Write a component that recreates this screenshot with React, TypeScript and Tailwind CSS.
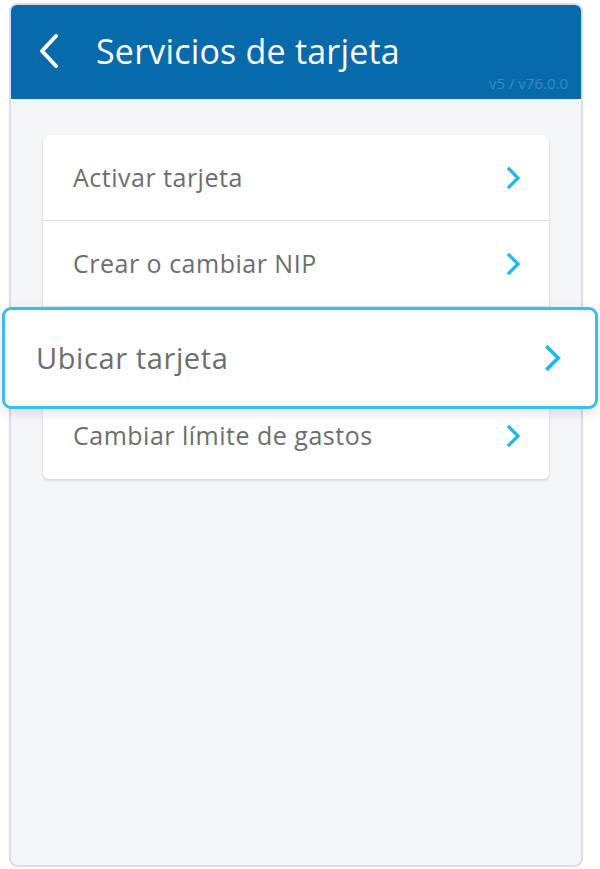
import React from "react";

const Chevron = ({ className }: { className?: string }) => (
  <svg viewBox="0 0 16 24" className={className} fill="none">
    <polyline points="3,3 12,12 3,21" stroke="#1cb9ea" strokeWidth="3.2" strokeLinecap="square" strokeLinejoin="miter" />
  </svg>
);

const rows = ["Activar tarjeta", "Crear o cambiar NIP", "Ubicar tarjeta", "Cambiar límite de gastos"];

export default function App() {
  return (
    <div className="relative w-[600px] h-[869px] bg-white" style={{ fontFamily: '"Open Sans", "Noto Sans", sans-serif' }}>
      <div className="pt-[3px] pl-[9px]">
        <div className="w-[574px] h-[864px] border-2 border-[#d7ddeb] rounded-[8px] overflow-hidden bg-[#f5f6f8] flex flex-col">
          <div className="h-[94px] bg-[#066aab] relative flex items-center shrink-0">
            <svg viewBox="0 0 24 36" className="w-[24px] h-[36px] ml-[26px] mt-[-2px]" fill="none">
              <polyline points="19,3 5,18 19,33" stroke="white" strokeWidth="4" strokeLinecap="round" strokeLinejoin="round" />
            </svg>
            <div className="ml-[35px] mt-[-2px] text-white text-[34px] tracking-[0.2px]">Servicios de tarjeta</div>
            <div className="absolute right-[13px] bottom-[5px] text-[15px] text-[#3d88c3]">v5 / v76.0.0</div>
          </div>
          <div className="px-[32px] pt-[36px]">
            <div className="bg-white rounded-[6px] shadow-[0_1px_3px_rgba(0,0,0,0.18)]">
              {rows.map((r, i) => (
                <div
                  key={r}
                  className={`h-[86px] flex items-center justify-between pl-[30px] pr-[27px] ${i < rows.length - 1 ? "border-b border-[#e3e3e5]" : ""}`}
                >
                  <span className={`text-[25px] text-[#6d6d6d] tracking-[0.5px] ${i === 2 ? "invisible" : ""}`}>{r}</span>
                  <Chevron className="w-[16px] h-[24px]" />
                </div>
              ))}
            </div>
          </div>
        </div>
      </div>
      <div className="absolute left-[2px] top-[307px] w-[596px] h-[102px] bg-white border-[3px] border-[#3bbdee] rounded-[9px] shadow-[0_4px_12px_rgba(60,90,140,0.18)] flex items-center justify-between pl-[31px] pr-[32px]">
        <span className="text-[29px] text-[#6d6d6d] tracking-[0.6px]">Ubicar tarjeta</span>
        <Chevron className="w-[19px] h-[28px]" />
      </div>
    </div>
  );
}
